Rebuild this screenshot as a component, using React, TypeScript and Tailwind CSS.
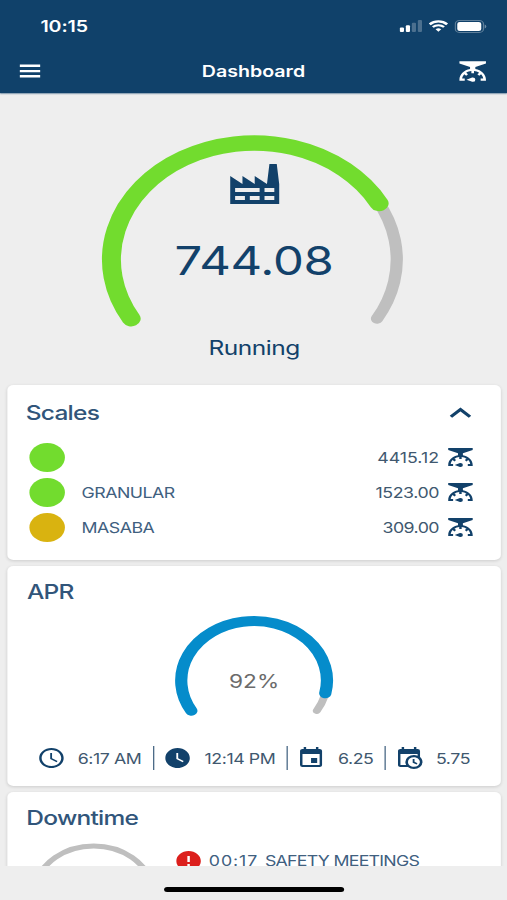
import React from 'react';
import { MdAccessTime, MdError, MdEvent, MdWatchLater } from 'react-icons/md';

const FACTORY =
  'M4,18V20H8V18H4M4,14V16H14V14H4M10,18V20H14V18H10M16,14V16H20V14H16M16,18V20H20V18H16M2,22V8L7,12V8L12,12V8L17,12L18,2H21L22,12V22H2Z';
const SCALE =
  'M8.46,15.06L7.05,16.47L5.68,15.1C4.82,16.21 4.24,17.54 4.06,19H6V21H2V20C2,15.16 5.44,11.13 10,10.2V8.2L2,5V3H22V5L14,8.2V10.2C18.56,11.13 22,15.16 22,20V21H18V19H19.94C19.76,17.54 19.18,16.21 18.32,15.1L16.95,16.47L15.54,15.06L16.91,13.68C15.8,12.82 14.46,12.24 13,12.06V14H11V12.06C9.54,12.24 8.18,12.82 7.09,13.68L8.46,15.06M12,18A2,2 0 0,1 14,20A2,2 0 0,1 12,22C11.68,22 11.38,21.93 11.12,21.79L7.27,20L11.12,18.21C11.38,18.07 11.68,18 12,18Z';
const CALENDAR_CLOCK =
  'M15,13H16.5V15.82L18.94,17.23L18.19,18.53L15,16.69V13M19,8H5V19H9.67C9.24,18.09 9,17.07 9,16A7,7 0 0,1 16,9C17.07,9 18.09,9.24 19,9.67V8M5,21C3.89,21 3,20.1 3,19V5C3,3.89 3.89,3 5,3H6V1H8V3H16V1H18V3H19A2,2 0 0,1 21,5V11.1C22.24,12.36 23,14.09 23,16A7,7 0 0,1 16,23C14.09,23 12.36,22.24 11.1,21H5M16,11.15A4.85,4.85 0 0,0 11.15,16C11.15,18.68 13.32,20.85 16,20.85A4.85,4.85 0 0,0 20.85,16C20.85,13.32 18.68,11.15 16,11.15Z';

const Icon = ({ path, className }: { path: string; className: string }) => (
  <svg viewBox="0 0 24 24" fill="currentColor" className={`shrink-0 ${className}`}>
    <path d={path} />
  </svg>
);

interface GaugeProps {
  radius: number;
  percent: number;
  color: string;
  width: number;
  trackWidth: number;
  className: string;
}

// 240 degree gauge, open at the bottom
const Gauge: React.FC<GaugeProps> = ({ radius, percent, color, width, trackWidth, className }) => {
  const c = radius + 10;
  const point = (p: number) => {
    const angle = ((149.5 + 2.41 * p) * Math.PI) / 180;
    return `${c + radius * Math.cos(angle)} ${c + radius * Math.sin(angle)}`;
  };
  const arc = (p: number) =>
    `M${point(0)} A${radius} ${radius} 0 ${p > 74.6 ? 1 : 0} 1 ${point(p)}`;

  return (
    <svg viewBox={`0 0 ${c * 2} ${c * 2}`} fill="none" strokeLinecap="round" className={className}>
      <path d={arc(100)} stroke="#bfbfbf" strokeWidth={trackWidth} />
      {percent > 0 && <path d={arc(percent)} stroke={color} strokeWidth={width} />}
    </svg>
  );
};

const scales = [
  { name: '', value: '4415.12', dot: 'bg-[#72dc2e]', tracking: 'tracking-normal' },
  { name: 'GRANULAR', value: '1523.00', dot: 'bg-[#72dc2e]', tracking: 'tracking-[-0.35px]' },
  { name: 'MASABA', value: '309.00', dot: 'bg-[#d9b310]', tracking: 'tracking-[-0.45px]' },
];

const StatusBar = () => (
  <div className="flex h-[50px] items-center justify-between pl-[33px] pr-[16.5px] pt-0.5 text-white">
    <span className="text-[16px] font-semibold tracking-[-0.1px]">10:15</span>
    <div className="flex items-center gap-[5px]">
      <svg viewBox="0 0 19 12" className="h-3 w-[19px]" fill="currentColor">
        <rect x="0.5" y="7.5" width="3.4" height="4.5" rx="0.9" />
        <rect x="5.4" y="5.3" width="3.4" height="6.7" rx="0.9" />
        <rect x="10.3" y="2.8" width="3.4" height="9.2" rx="0.9" opacity="0.25" />
        <rect x="15.2" y="0" width="3.4" height="12" rx="0.9" opacity="0.25" />
      </svg>
      <svg viewBox="0 0 16 12" className="h-3 w-4" fill="none" stroke="currentColor">
        <path d="M0.9 4.3a10.2 10.2 0 0 1 14.2 0" strokeWidth="2.3" />
        <path d="M3.4 7a6.6 6.6 0 0 1 9.2 0" strokeWidth="2" />
        <path d="M8 11.7 5.7 9.3a3.3 3.3 0 0 1 4.6 0Z" fill="currentColor" stroke="none" />
      </svg>
      <svg viewBox="0 0 26.5 13" className="h-[13px] w-[26.5px]">
        <rect x="0.8" y="0.6" width="23" height="11.8" rx="3.4" fill="none" stroke="#fff" strokeOpacity="0.33" />
        <rect x="2.4" y="1.9" width="19.6" height="9.2" rx="2" fill="#fff" />
        <path d="M24.8 4.5v4a2.2 2.2 0 0 0 0-4Z" fill="#fff" fillOpacity="0.4" />
      </svg>
    </div>
  </div>
);

const Card = ({ className, children }: { className: string; children: React.ReactNode }) => (
  <section className={`rounded-[5px] bg-white shadow-[0_1px_3px_rgba(0,0,0,0.14)] ${className}`}>{children}</section>
);

const Title = ({ children }: { children: React.ReactNode }) => (
  <h2 className="text-[20px] font-medium leading-6 tracking-[-0.6px] text-[#31557a]">{children}</h2>
);

const Stat = ({ icon, value, className }: { icon: React.ReactNode; value: string; className: string }) => (
  <div className={`flex h-6 items-center gap-2.5 whitespace-nowrap ${className}`}>
    {icon}
    <span className="pt-0.5 text-[14.5px] tracking-[-0.35px] text-[#40586f]">{value}</span>
  </div>
);

export default function App() {
  return (
    <div className="h-[900px] w-[507px] overflow-hidden bg-[#eeeeee]">
      {/* 414pt wide screen stretched over the full width */}
      <div className="flex h-[900px] w-[414px] origin-top-left scale-x-[1.2246] flex-col bg-[#eeeeee] font-['Inter','Liberation_Sans',sans-serif] text-[#12416a]">
        <header className="h-[93px] shrink-0 bg-[#10416a] shadow-[0_1px_1px_rgba(16,65,106,0.5)]">
          <StatusBar />
          <div className="grid h-[42px] grid-cols-[1fr_auto_1fr] items-center px-[15.5px] text-white">
            <svg viewBox="0 0 17 14" className="h-[14px] w-[17px]" fill="currentColor">
              <path d="M0 .6h17v2.5H0zM0 5.9h17v2.4H0zM0 11.1h17v2.5H0z" />
            </svg>
            <h1 className="text-[16px] font-semibold">Dashboard</h1>
            <Icon path={SCALE} className="h-[26px] w-[26px] justify-self-end" />
          </div>
        </header>

        <main className="min-h-0 flex-1 overflow-hidden pl-1.5 pr-[5px]">
          <div className="relative flex h-[292px] flex-col items-center pt-10">
            <Gauge
              radius={116.5}
              percent={75.4}
              color="#72dc2e"
              width={15.5}
              trackWidth={10}
              className="h-[253px] w-[253px] shrink-0"
            />
            <div className="absolute inset-x-0 top-[66.5px] flex flex-col items-center">
              <Icon path={FACTORY} className="h-12 w-12" />
              <span className="mt-[29px] text-[40px] leading-[48px] tracking-[-0.2px]">744.08</span>
              <span className="mt-[51px] text-[20px] leading-6 tracking-[-0.4px]">Running</span>
            </div>
          </div>

          <Card className="h-[175px] pt-4">
            <div className="flex items-center justify-between pl-[15px] pr-[24px]">
              <Title>Scales</Title>
              <svg viewBox="0 0 18 12" className="h-3 w-[18px]" fill="none" stroke="#12416a" strokeWidth="2.9">
                <path d="M1.2 9.8 9 2.4l7.8 7.4" />
              </svg>
            </div>
            <div className="mt-[14.5px] flex flex-col">
              {scales.map((s) => (
                <div key={s.value} className="flex h-[35px] items-center pl-[18px] pr-[21.5px]">
                  <span className={`h-[29px] w-[29px] rounded-full ${s.dot}`} />
                  <span className="ml-[13.5px] pt-px text-[14.5px] tracking-[-0.4px] text-[#40607f]">{s.name}</span>
                  <span className={`ml-auto mr-[5px] pt-px text-[14.5px] text-[#40586f] ${s.tracking}`}>{s.value}</span>
                  <Icon path={SCALE} className="h-6 w-6" />
                </div>
              ))}
            </div>
          </Card>

          <Card className="relative mt-1.5 h-[220px] pt-[14px]">
            <div className="pl-4">
              <Title>APR</Title>
            </div>
            <div className="relative mt-[7px] flex h-[135px] justify-center">
              <Gauge
                radius={59.5}
                percent={92.5}
                color="#058ccb"
                width={10}
                trackWidth={6.5}
                className="h-[139px] w-[139px] shrink-0"
              />
              <span className="absolute inset-x-0 top-[58px] text-center text-[18.5px] leading-6 text-[#6b6b6b]">92%</span>
            </div>
            <div className="grid grid-cols-[118.5px_109px_80px_1fr]">
              <Stat className="pl-[23.5px]" value="6:17 AM" icon={<MdAccessTime className="h-6 w-6 shrink-0" />} />
              <Stat
                className="border-l-[1.5px] border-[#40607f] pl-[7.5px]"
                value="12:14 PM"
                icon={<MdWatchLater className="h-6 w-6 shrink-0" />}
              />
              <Stat
                className="border-l-[1.5px] border-[#40607f] pl-[7.5px]"
                value="6.25"
                icon={<MdEvent className="h-6 w-6 shrink-0" />}
              />
              <Stat
                className="border-l-[1.5px] border-[#40607f] pl-[7.5px]"
                value="5.75"
                icon={<Icon path={CALENDAR_CLOCK} className="h-6 w-6" />}
              />
            </div>
          </Card>

          <Card className="mt-1.5 h-[170px] pt-[14px]">
            <div className="pl-[15.5px]">
              <Title>Downtime</Title>
            </div>
            <div className="flex items-start pl-3">
              <Gauge
                radius={48.5}
                percent={0}
                color="#058ccb"
                width={8}
                trackWidth={5}
                className="mt-[6px] h-[117px] w-[117px] shrink-0"
              />
              <div className="ml-[6.5px] mt-[19px] flex items-center whitespace-nowrap text-[14.5px] text-[#40607f]">
                <MdError className="h-6 w-6 text-[#dc1f1c]" />
                <span className="ml-[5px] tracking-[0.75px]">00:17</span>
                <span className="ml-[5.5px] tracking-[-0.6px]">SAFETY MEETINGS</span>
              </div>
            </div>
          </Card>
        </main>

        <footer className="flex h-[34px] shrink-0 items-start justify-center bg-[#eeeeee] pt-[21px]">
          <div className="h-[5px] w-[147px] rounded-full bg-black" />
        </footer>
      </div>
    </div>
  );
}
